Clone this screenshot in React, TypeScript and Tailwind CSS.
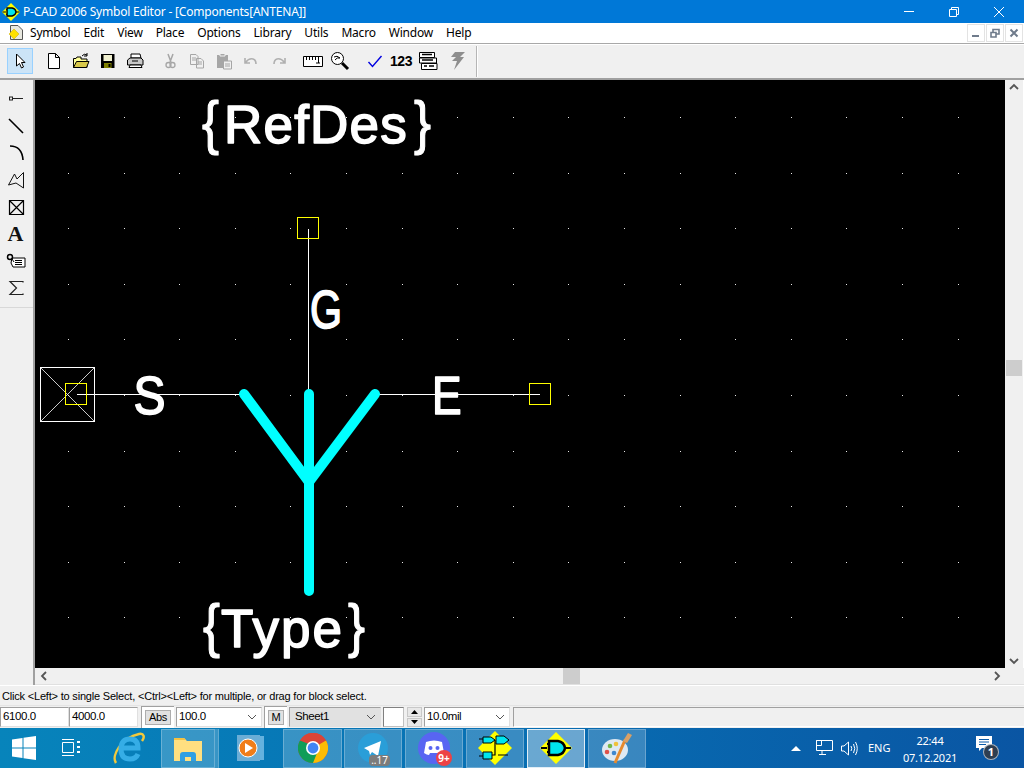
import React from "react";

const gridX = Array.from({ length: 18 }, (_, i) => Math.round(68 - 35 + i * 55.6));
const gridY = Array.from({ length: 10 }, (_, i) => Math.round(117 - 80 + i * 55.6));
const menus = ["Symbol", "Edit", "View", "Place", "Options", "Library", "Utils", "Macro", "Window", "Help"];

function PcadIcon({ size = 18 }: { size?: number }) {
  return (
    <svg width={size} height={size} viewBox="0 0 32 32">
      <path d="M16 0 L32 16 L16 32 L0 16 Z" fill="#ffff00" />
      <path d="M1 16 H7 M25 16 H31 M7 12 H9 M7 20 H9" stroke="#000" strokeWidth="2" />
      <path d="M9 9 H18 Q24 10 25 16 Q24 22 18 23 H9 Z" fill="#00e5ee" stroke="#000" strokeWidth="2.5" />
    </svg>
  );
}

function Tool({ children, ml = 0, active = false }: { children: React.ReactNode; ml?: number; active?: boolean }) {
  return (
    <div
      style={{ marginLeft: ml }}
      className={`w-[26px] h-[26px] flex items-center justify-center border ${active ? "bg-[#cce4f7] border-[#99d1ff]" : "border-transparent"}`}
    >
      {children}
    </div>
  );
}

function Icon({ children, w = 18, h = 18 }: { children: React.ReactNode; w?: number; h?: number }) {
  return (
    <svg width={w} height={h} viewBox={`0 0 ${w} ${h}`} fill="none">
      {children}
    </svg>
  );
}

function Toolbar() {
  return (
    <div className="h-[33px] bg-[#f0f0f0] flex items-center pl-[7px] pb-px">
      <Tool active>
        <Icon>
          <path d="M5.5 2 V14 L8.5 11.5 L10.5 16 L12.5 15 L10.5 10.5 L14 10.5 Z" fill="#fff" stroke="#000" />
        </Icon>
      </Tool>
      <Tool ml={8}>
        <Icon>
          <path d="M3.5 1.5 H10.5 L14.5 5.5 V16.5 H3.5 Z M10.5 1.5 V5.5 H14.5" fill="#fff" stroke="#000" />
        </Icon>
      </Tool>
      <Tool ml={1}>
        <Icon>
          <path d="M1.5 15.5 V6.5 H4 L5 5 H9 V7 H15 V15.5 Z" fill="#ffff99" stroke="#000" />
          <path d="M1.5 15.5 L4.5 9.5 H17 L14.5 15.5 Z" fill="#d8c84a" stroke="#000" />
          <path d="M10 4 Q12 1 15 3 M15 1 V4 H12" stroke="#000" />
        </Icon>
      </Tool>
      <Tool ml={1}>
        <Icon>
          <path d="M2 2 H15.5 V16 H2 Z" fill="#000" />
          <path d="M4.5 3 H13 V9 H4.5 Z" fill="#f0f0d0" />
          <path d="M5 11 H12.5 V16 H5 Z" fill="#808000" />
          <path d="M9.5 12 H11.5 V15 H9.5 Z" fill="#000" />
        </Icon>
      </Tool>
      <Tool ml={1}>
        <Icon>
          <path d="M5 2 H14 L15 6 H5 Z" fill="#fff" stroke="#000" />
          <path d="M1.5 8 L4 6 H15 L17 8 V13 H1.5 Z" fill="#c8c8c8" stroke="#000" />
          <path d="M4 13 H15 L16 15.5 H3 Z" fill="#fff" stroke="#000" />
          <path d="M6 9 H12" stroke="#000" />
        </Icon>
      </Tool>
      <Tool ml={9}>
        <Icon>
          <path d="M7 2 L10 10 M12 2 L9 10" stroke="#a6a6a6" strokeWidth="1.5" />
          <circle cx="7.5" cy="13" r="2.5" stroke="#a6a6a6" strokeWidth="1.3" />
          <circle cx="11.5" cy="13" r="2.5" stroke="#a6a6a6" strokeWidth="1.3" />
        </Icon>
      </Tool>
      <Tool ml={1}>
        <Icon>
          <path d="M2.5 2.5 H8 L10 4.5 V12.5 H2.5 Z M8.5 6.5 H13 L15.5 9 V16 H8.5 Z" fill="#f0f0f0" stroke="#a6a6a6" />
          <path d="M4 6 H8 M4 8 H8 M10 10 H14 M10 12 H14" stroke="#a6a6a6" />
        </Icon>
      </Tool>
      <Tool ml={1}>
        <Icon>
          <path d="M2 3 H13 V16 H2 Z" fill="#a6a6a6" />
          <path d="M5 1.5 H10 V4 H5 Z" fill="#a6a6a6" stroke="#f0f0f0" />
          <path d="M8.5 9 H16.5 V17 H8.5 Z" fill="#f0f0f0" stroke="#a6a6a6" />
          <path d="M10 12 H15 M10 14 H15" stroke="#a6a6a6" />
        </Icon>
      </Tool>
      <Tool ml={1}>
        <Icon>
          <path d="M3 6 V11 H8 M3.5 10.5 Q7 6 11 7 Q14 8 14 12" stroke="#b0b0b0" strokeWidth="1.6" />
        </Icon>
      </Tool>
      <Tool ml={2}>
        <Icon>
          <path d="M15 6 V11 H10 M14.5 10.5 Q11 6 7 7 Q4 8 4 12" stroke="#b0b0b0" strokeWidth="1.6" />
        </Icon>
      </Tool>
      <Tool ml={8}>
        <Icon w={20} h={14}>
          <path d="M.5 2.5 H19.5 V12.5 H.5 Z" fill="#fff" stroke="#000" />
          <path d="M3.5 3 V6 M6.5 3 V6 M9.5 3 V6 M12.5 3 V6 M15.5 3 V9 M13 9 H17" stroke="#000" />
        </Icon>
      </Tool>
      <Tool ml={1}>
        <Icon w={20} h={20}>
          <circle cx="7.5" cy="7.5" r="6" fill="#fff" stroke="#000" />
          <path d="M4 6 Q7 4 10 7 Q7 6 5 9" stroke="#000" />
          <path d="M12 12 L18 18" stroke="#000" strokeWidth="3" />
        </Icon>
      </Tool>
      <Tool ml={9}>
        <Icon w={16} h={16}>
          <path d="M1.5 9 L5.5 13.5 L14.5 3" stroke="#0000e0" strokeWidth="1.4" />
        </Icon>
      </Tool>
      <Tool ml={0}>
        <span className="text-[14px] font-bold text-black tracking-[-0.5px] [font-family:'Liberation_Sans',sans-serif]">123</span>
      </Tool>
      <Tool ml={1}>
        <Icon w={20} h={20}>
          <path d="M1.5 1.5 H16.5 V6.5 H1.5 Z M1.5 7 H18.5 V12 H1.5 Z M3.5 12.5 H19 V18.5 H3.5 Z" fill="#fff" stroke="#000" />
          <path d="M4 3.5 H14 M4 9 H15 M6 15 H9 M11 15 H16" stroke="#000" strokeWidth="1.5" />
        </Icon>
      </Tool>
      <Tool ml={4}>
        <Icon w={16} h={20}>
          <path d="M5 1 H15 L10 6 H14 L4 19 L7 10 H2 L6 6 H1 Z" fill="#8e8e8e" />
        </Icon>
      </Tool>
      <div className="ml-[5px] h-[31px] w-[2px] border-l border-[#b5b5b5] border-r-white border-r" />
    </div>
  );
}

function SidePanel() {
  return (
    <div className="w-[35px] shrink-0 bg-[#f0f0f0] border-r-2 border-r-[#a0a0a0] flex flex-col">
      <div className="h-[228px] border-b border-b-[#d8d8d8] flex flex-col items-center pt-[9px] pr-[2px] gap-[7px]">
        <Icon w={20} h={20}>
          <path d="M6 9.5 H17" stroke="#222" />
          <rect x="3.5" y="8" width="3" height="3" stroke="#222" />
        </Icon>
        <Icon w={20} h={20}>
          <path d="M3 3 L17 17" stroke="#000" strokeWidth="1.6" />
        </Icon>
        <Icon w={20} h={20}>
          <path d="M4 3 Q16 3 17 17" stroke="#000" strokeWidth="1.6" />
        </Icon>
        <Icon w={20} h={20}>
          <path d="M2.5 15 L8.5 4 L11 9 L17.5 2.5 V18 L10 13 Z" stroke="#111" />
        </Icon>
        <Icon w={20} h={20}>
          <path d="M3.5 3.5 H17.5 V17.5 H3.5 Z M3.5 3.5 L17.5 17.5 M17.5 3.5 L3.5 17.5" stroke="#000" strokeWidth="1.2" />
        </Icon>
        <div className="w-5 h-5 flex items-center justify-center text-[22px] leading-none font-bold text-[#111] [font-family:'Liberation_Serif',serif]">A</div>
        <Icon w={20} h={20}>
          <path d="M6 7 H19 V16 H7 L5 12 Z" fill="#fff" stroke="#000" />
          <circle cx="4" cy="6" r="2.5" stroke="#000" strokeWidth="1.5" />
          <path d="M6 8 L8 11 M9 9.5 H16 M9 11.5 H16 M9 13.5 H16" stroke="#000" />
        </Icon>
        <Icon w={20} h={20}>
          <path d="M17 4.5 V3.5 H4 L10.5 10 L4 16.5 H17 V15.5" stroke="#222" strokeWidth="1.2" />
        </Icon>
      </div>
    </div>
  );
}

function Schematic() {
  const X = (n: number) => n - 35;
  const Y = (n: number) => n - 80;
  const label = "[font-family:'Liberation_Sans',sans-serif]";
  return (
    <svg width="970" height="588" viewBox="0 0 970 588" className="block bg-black" shapeRendering="auto">
      {gridX.map((x) =>
        gridY.map((y) => <rect key={`${x}-${y}`} x={x} y={y} width="1" height="1" fill="#e8e8e8" />)
      )}
      <g stroke="#fff" fill="none" shapeRendering="crispEdges">
        <path d={`M${X(77)} ${Y(394.5)} H${X(244)} M${X(375)} ${Y(394.5)} H${X(540)} M${X(308.5)} ${Y(229)} V${Y(394)}`} />
        <rect x={X(40.5)} y={Y(367.5)} width="54" height="54" />
      </g>
      <path d={`M${X(41)} ${Y(368)} L${X(94)} ${Y(421)} M${X(94)} ${Y(368)} L${X(41)} ${Y(421)}`} stroke="#fff" strokeWidth="0.8" />
      <g stroke="#ffff00" fill="none" shapeRendering="crispEdges">
        <rect x={X(65.5)} y={Y(383.5)} width="21" height="21" />
        <rect x={X(297.5)} y={Y(217.5)} width="21" height="21" />
        <rect x={X(529.5)} y={Y(383.5)} width="21" height="21" />
      </g>
      <path
        d={`M${X(309)} ${Y(394)} V${Y(591)} M${X(244)} ${Y(394)} L${X(309)} ${Y(482)} L${X(375)} ${Y(394)}`}
        stroke="#00ffff"
        strokeWidth="10"
        strokeLinecap="round"
        strokeLinejoin="round"
        fill="none"
      />
      <g fill="#fff" stroke="#fff" strokeLinejoin="round" className={label}>
        <text x={X(224)} y={Y(143)} fontSize="53" strokeWidth="1.6" letterSpacing="1.2">RefDes</text>
        <text x={X(202)} y={Y(143)} fontSize="60" strokeWidth="1.2" textLength="17" lengthAdjust="spacingAndGlyphs">{"{"}</text>
        <text x={X(414)} y={Y(143)} fontSize="60" strokeWidth="1.2" textLength="17" lengthAdjust="spacingAndGlyphs">{"}"}</text>
        <text x={X(221)} y={Y(647)} fontSize="53" strokeWidth="1.6" letterSpacing="2">Type</text>
        <text x={X(203)} y={Y(646)} fontSize="60" strokeWidth="1.2" textLength="17" lengthAdjust="spacingAndGlyphs">{"{"}</text>
        <text x={X(348)} y={Y(646)} fontSize="60" strokeWidth="1.2" textLength="17" lengthAdjust="spacingAndGlyphs">{"}"}</text>
        <text x={X(133.6)} y={Y(414)} fontSize="53" strokeWidth="1.6" textLength="32" lengthAdjust="spacingAndGlyphs">S</text>
        <text x={X(432)} y={Y(414)} fontSize="53" strokeWidth="1.6" textLength="29.6" lengthAdjust="spacingAndGlyphs">E</text>
        <text x={X(310)} y={Y(328)} fontSize="53" strokeWidth="1.6" textLength="32" lengthAdjust="spacingAndGlyphs">G</text>
      </g>
    </svg>
  );
}

function Chevron({ dir }: { dir: "up" | "down" | "left" | "right" }) {
  const d = { up: "M1 6 L5 2 L9 6", down: "M1 2 L5 6 L9 2", left: "M6 1 L2 5 L6 9", right: "M2 1 L6 5 L2 9" }[dir];
  const w = dir === "up" || dir === "down" ? 10 : 8;
  const h = dir === "up" || dir === "down" ? 8 : 10;
  return (
    <svg width={w} height={h} viewBox={`0 0 ${w} ${h}`} fill="none">
      <path d={d} stroke="#555" strokeWidth="1.8" />
    </svg>
  );
}

function Field({ w, text, select = false, gray = false }: { w: string; text: string; select?: boolean; gray?: boolean }) {
  return (
    <div className={`${w} h-[20px] flex items-center justify-between pl-[2px] pr-1 border border-t-[#a0a0a0] border-l-[#a0a0a0] border-r-[#e0e0e0] border-b-[#e0e0e0] ${gray ? "bg-[#e1e1e1]" : "bg-white"}`}>
      <span className={gray ? "pl-[3px]" : ""}>{text}</span>
      {select && (
        <svg width="10" height="6" viewBox="0 0 10 6" fill="none">
          <path d="M1 1 L5 5 L9 1" stroke="#555" />
        </svg>
      )}
    </div>
  );
}

function TaskBtn({ w, children, active = false, plain = false, ml = 0 }: { w: number; children: React.ReactNode; active?: boolean; plain?: boolean; ml?: number }) {
  return (
    <div
      style={{ width: w, marginLeft: ml }}
      className={`h-[39px] flex items-center justify-center relative shrink-0 border ${
        active ? "bg-white/40 border-white/80" : plain ? "border-transparent" : "bg-white/20 border-white/25"
      }`}
    >
      {children}
    </div>
  );
}

function Taskbar() {
  return (
    <div className="h-10 bg-gradient-to-r from-[#0784bb] via-[#086fb3] to-[#0a55a3] flex items-center text-white shrink-0">
      <div className="w-[48px] pl-3 flex items-center">
        <svg width="24" height="24" viewBox="0 0 24 24" fill="#fff">
          <path d="M0 3.5 L10.5 2 V11.5 H0 Z M11.5 1.8 L24 0 V11.5 H11.5 Z M0 12.5 H10.5 V22 L0 20.5 Z M11.5 12.5 H24 V24 L11.5 22.2 Z" />
        </svg>
      </div>
      <div className="ml-[14px] w-[18px]">
        <svg width="18" height="18" viewBox="0 0 18 18" fill="none" stroke="#fff">
          <path d="M.5 3.5 H11.5 V13.5 H.5 Z M0 .5 H12 M0 16.5 H12" />
          <path d="M15 3 H18 M15 8 H18 M15 13 H18" strokeWidth="2" />
        </svg>
      </div>
      <div className="ml-[33px] w-8">
        <svg width="32" height="32" viewBox="0 0 32 32" fill="none">
          <path d="M3 31 C-2 24 8 6 26 2 C31 1 32 5 29 9" stroke="#f3c93b" strokeWidth="2.5" />
          <path d="M9 16 H25 Q25 7 17 7 Q8 7 8 17 Q8 27 17 27 Q23 27 25 22" stroke="#35ade6" strokeWidth="5" />
        </svg>
      </div>
      <TaskBtn w={54} ml={16}>
        <svg width="30" height="27" viewBox="0 0 30 27">
          <path d="M1 3 H11 L14 6 H29 V26 H1 Z" fill="#ffdf80" />
          <path d="M1 3 H11 L13 5 H1 Z" fill="#f5c242" />
          <path d="M7 26 V20 Q7 17 10 17 H20 Q23 17 23 20 V26 H18 V22 H12 V26 Z" fill="#2f9fe3" />
        </svg>
      </TaskBtn>
      <div className="w-[4px] h-[39px] bg-white/20 border-r border-white/20" />
      <TaskBtn w={56} plain ml={3}>
        <svg width="28" height="28" viewBox="0 0 28 28">
          <rect x="4" y="2" width="24" height="24" fill="#7cc0e8" opacity=".8" />
          <rect x="1" y="1" width="23" height="26" fill="#6badd6" />
          <circle cx="12" cy="14" r="9" fill="#f07d1a" stroke="#fff" strokeWidth="1" />
          <path d="M9 9 L17 14 L9 19 Z" fill="#fff" />
        </svg>
      </TaskBtn>
      <TaskBtn w={59} ml={5}>
        <svg width="30" height="30" viewBox="0 0 30 30">
          <circle cx="15" cy="15" r="15" fill="#db4437" />
          <path d="M15 30 A15 15 0 0 0 28 7.5 L15 15 Z" fill="#fbbc05" />
          <path d="M2 7.5 A15 15 0 0 0 15 30 L21 15 Z" fill="#0f9d58" />
          <path d="M2 7.5 A15 15 0 0 1 28 7.5 H15 Z" fill="#db4437" />
          <circle cx="15" cy="15" r="7" fill="#fff" />
          <circle cx="15" cy="15" r="5.4" fill="#4285f4" />
        </svg>
      </TaskBtn>
      <TaskBtn w={58} ml={2}>
        <svg width="30" height="30" viewBox="0 0 30 30">
          <circle cx="15" cy="15" r="15" fill="#2a9ed8" />
          <path d="M6 15 L23 8 L20 23 L14 19 L12 22 L11 18 Z" fill="#fff" />
        </svg>
        <span className="absolute right-[11px] bottom-[1px] bg-[#7c7c7c] text-[10px] leading-[11px] px-[2px] rounded-sm [font-family:'Noto_Sans',sans-serif]">..17</span>
      </TaskBtn>
      <TaskBtn w={58} ml={3}>
        <svg width="32" height="32" viewBox="0 0 32 32">
          <circle cx="16" cy="16" r="16" fill="#5865f2" />
          <path d="M8 10 Q16 7 24 10 L26 21 Q23 23 21 23 L20 21 H12 L11 23 Q9 23 6 21 Z" fill="#fff" />
          <circle cx="12.5" cy="16" r="2" fill="#5865f2" />
          <circle cx="19.5" cy="16" r="2" fill="#5865f2" />
        </svg>
        <span className="absolute right-[10px] bottom-[1px] w-[16px] h-[16px] rounded-full bg-[#ed4245] text-[10px] leading-[16px] text-center font-bold [font-family:'Noto_Sans',sans-serif]">9+</span>
      </TaskBtn>
      <TaskBtn w={58} ml={3}>
        <svg width="34" height="34" viewBox="0 0 34 34">
          <path d="M17 0 L34 17 L17 34 L0 17 Z" fill="#ffff00" />
          <path d="M5 6 H13 L17 9 L13 12 H5 Z M18 5 H26 L31 9 L26 13 H18 Z M5 21 H14 V28 H5 Z" fill="#00e5ee" stroke="#000" />
          <path d="M17 9 V24 H14 M1 8 H5 M1 25 H5 M20 24 L30 24" stroke="#000" strokeWidth="1.2" fill="none" />
        </svg>
      </TaskBtn>
      <TaskBtn w={58} active ml={3}>
        <PcadIcon size={32} />
      </TaskBtn>
      <TaskBtn w={58} ml={3}>
        <svg width="32" height="32" viewBox="0 0 32 32">
          <ellipse cx="14" cy="18" rx="13" ry="11" fill="#dfe9f2" />
          <circle cx="6" cy="20" r="2.3" fill="#e0524a" />
          <circle cx="9" cy="14" r="2.3" fill="#73b749" />
          <circle cx="15" cy="12" r="2.3" fill="#f0c23b" />
          <circle cx="13" cy="21" r="2.3" fill="#4088cf" />
          <path d="M14 31 L24 8" stroke="#e68a2e" strokeWidth="3" />
          <path d="M22 9 L27 1 L31 3 L26 11 Z" fill="#d9a066" />
        </svg>
      </TaskBtn>
      <div className="flex-1" />
      <svg width="10" height="6" viewBox="0 0 10 6" className="mr-[15px]">
        <path d="M0 6 L5 1 L10 6 Z" fill="#fff" />
      </svg>
      <svg width="17" height="17" viewBox="0 0 17 17" fill="none" stroke="#fff" className="mr-[8px]">
        <path d="M.5 .5 H16.5 V10.5 H.5 Z M6 10.5 V14.5 M3 14.5 H10" />
        <path d="M.5 .5 H5.5 V5.5 H.5 Z" />
      </svg>
      <svg width="17" height="15" viewBox="0 0 17 15" fill="none" stroke="#fff" className="mr-[10px]">
        <path d="M.5 5 H3 L7.5 1 V14 L3 10 H.5 Z M10 5 Q11.5 7.5 10 10 M12.5 3 Q15 7.5 12.5 12 M14.5 1 Q18 7.5 14.5 14" />
      </svg>
      <span className="text-[11px] w-[24px] mr-[11px]">ENG</span>
      <div className="w-[54px] flex flex-col items-center text-[11px] tracking-[-0.2px] leading-[17px] mr-[19px] pt-[1px]">
        <span>22:44</span>
        <span className="whitespace-nowrap">07.12.2021</span>
      </div>
      <div className="relative w-[22px] h-[24px] mr-[26px]">
        <svg width="16" height="16" viewBox="0 0 16 16" className="absolute left-0 top-0">
          <path d="M0 0 H16 V12 H6 L3 15 V12 H0 Z" fill="#fff" />
          <path d="M3 3.5 H13 M3 6 H13 M3 8.5 H10" stroke="#0a5aa8" />
        </svg>
        <span className="absolute left-[7px] top-[8px] w-[16px] h-[16px] rounded-full bg-[#2e3e50] border border-white/60 text-[11px] leading-[14px] text-center font-bold">1</span>
      </div>
    </div>
  );
}

export default function App() {
  return (
    <div className="w-[1024px] h-[768px] flex flex-col overflow-hidden bg-[#f0f0f0] text-black text-[12px] [font-family:'Noto_Sans',sans-serif]">
      <header className="h-[23px] bg-[#0078d7] text-white flex items-center shrink-0 pr-[3px]">
        <div className="ml-[2px] w-[18px] mr-[3px] flex">
          <PcadIcon size={18} />
        </div>
        <span className="whitespace-nowrap tracking-[-0.2px]">P-CAD 2006 Symbol Editor - [Components[ANTENA]]</span>
        <div className="flex-1" />
        <div className="w-[45px] flex justify-center pb-px">
          <svg width="10" height="10" viewBox="0 0 10 10"><path d="M0 5.5 H10" stroke="#fff" /></svg>
        </div>
        <div className="w-[45px] flex justify-center">
          <svg width="10" height="10" viewBox="0 0 10 10" fill="none" stroke="#fff"><path d="M.5 2.5 H7.5 V9.5 H.5 Z M2.5 2.5 V.5 H9.5 V7.5 H7.5" /></svg>
        </div>
        <div className="w-[45px] flex justify-center">
          <svg width="10" height="10" viewBox="0 0 10 10" stroke="#fff"><path d="M0 0 L10 10 M10 0 L0 10" /></svg>
        </div>
      </header>
      <nav className="h-5 bg-white flex items-center shrink-0">
        <div className="w-[16px] ml-2 mr-[6px]">
          <svg width="16" height="16" viewBox="0 0 16 16">
            <path d="M2.5 .5 H10 L14.5 5 V14.5 H2.5 Z" fill="#e8e8e0" stroke="#555" />
            <path d="M6 4 L11 9 L6 14 L1 9 Z" fill="#ffe000" stroke="#c8a800" strokeWidth=".5" />
          </svg>
        </div>
        <div className="flex gap-[13px] tracking-[-0.2px]">
          {menus.map((m) => (
            <span key={m}>{m}</span>
          ))}
        </div>
        <div className="flex-1" />
        <div className="flex gap-px pr-px">
          {["min", "restore", "close"].map((b) => (
            <div key={b} className="w-[18px] h-[18px] border border-[#e3e3e3] flex items-center justify-center">
              <svg width="10" height="10" viewBox="0 0 10 10" fill="none" stroke="#6f7b8b" strokeWidth="1.6">
                {b === "min" && <path d="M1 8 H8" strokeWidth="2" />}
                {b === "restore" && <path d="M1 4.5 H6 V9 H1 Z M3 4 V1.5 H9 V6 H6" />}
                {b === "close" && <path d="M1.5 1.5 L8.5 8.5 M8.5 1.5 L1.5 8.5" strokeWidth="2" />}
              </svg>
            </div>
          ))}
        </div>
      </nav>
      <div className="h-[2px] bg-[#a8a8a8] border-b border-b-white shrink-0" />
      <Toolbar />
      <div className="h-[2px] bg-[#a0a0a0] shrink-0" />
      <div className="h-[605px] flex shrink-0">
        <SidePanel />
        <div className="flex-1 flex flex-col min-w-0">
          <div className="flex h-[588px]">
            <Schematic />
            <div className="w-[19px] flex flex-col items-center pt-[3px] pb-[3px] pr-px bg-[#f0f0f0] border-r border-r-white">
              <Chevron dir="up" />
              <div className="w-[16px] h-[16px] bg-[#cdcdcd] mt-[269px] mb-auto" />
              <Chevron dir="down" />
            </div>
          </div>
          <div className="h-[17px] flex items-center justify-between pl-[5px] pr-[23px] border-b border-b-[#e0e0e0] relative">
            <Chevron dir="left" />
            <div className="absolute left-[528px] top-0 w-[17px] h-[16px] bg-[#cdcdcd]" />
            <Chevron dir="right" />
          </div>
        </div>
      </div>
      <div className="h-[21px] px-[2px] pt-[2px] flex items-center text-[11px] border-t border-t-white border-b border-b-[#e4e4e4] shrink-0 [font-family:'Liberation_Sans',sans-serif] tracking-[-0.19px] whitespace-nowrap">
        {"Click <Left> to single Select, <Ctrl><Left> for multiple, or drag for block select."}
      </div>
      <div className="h-[22px] flex items-center text-[11.5px] tracking-[-0.4px] shrink-0 [font-family:'Liberation_Sans',sans-serif]">
        <Field w="w-[69px]" text="6100.0" />
        <Field w="w-[69px]" text="4000.0" />
        <div className="ml-[3px] w-[33px] h-[22px] bg-white border border-[#a0a0a0] border-r-0 border-b-0 p-[3px] flex">
          <div className="flex-1 bg-[#e1e1e1] border border-[#adadad] flex items-center justify-center text-[11px]">Abs</div>
        </div>
        <div className="ml-[2px]"><Field w="w-[86px]" text="100.0" select /></div>
        <div className="ml-[2px] w-[23px] h-[22px] bg-white border border-[#a0a0a0] border-r-0 border-b-0 p-[3px] flex">
          <div className="flex-1 bg-[#e1e1e1] border border-[#adadad] flex items-center justify-center text-[11px]">M</div>
        </div>
        <div className="ml-[2px]"><Field w="w-[92px]" text="Sheet1" select gray /></div>
        <div className="ml-[2px] w-[21px] h-[20px] bg-white border border-[#808080] border-r-[#c0c0c0] border-b-[#c0c0c0]" />
        <div className="ml-[3px] w-[15px] h-[20px] flex flex-col gap-px">
          {["M1 5 L4.5 1 L8 5 Z", "M1 1 L4.5 5 L8 1 Z"].map((d) => (
            <div key={d} className="flex-1 bg-[#e8e8e8] border border-[#c8c8c8] flex items-center justify-center">
              <svg width="9" height="6" viewBox="0 0 9 6"><path d={d} fill="#000" /></svg>
            </div>
          ))}
        </div>
        <div className="ml-[2px]"><Field w="w-[86px]" text="10.0mil" select /></div>
        <div className="ml-[3px] flex-1 h-[20px] border border-[#a0a0a0] border-r-0 border-b-white" />
      </div>
      <Taskbar />
    </div>
  );
}
